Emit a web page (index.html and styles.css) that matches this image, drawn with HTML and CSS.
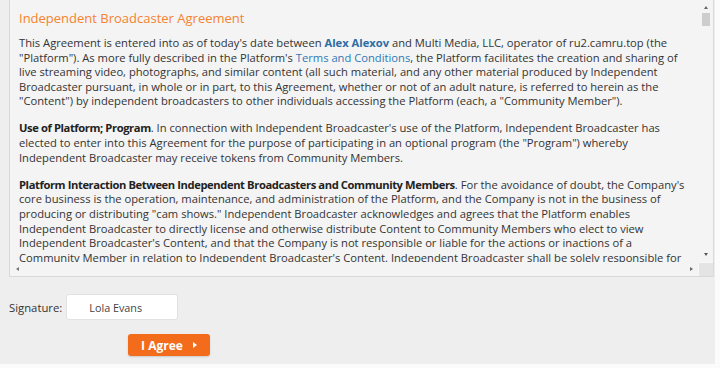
FILE: index.html
```
<!DOCTYPE html>
<html lang="en">
<head>
  <meta charset="UTF-8">
  <title>Independent Broadcaster Agreement</title>
  <link rel="stylesheet" href="styles.css">
</head>
<body>
  <div class="page">

    <!-- agreement box with fake scrollbars -->
    <div class="agreement">
      <div class="agreement-text">
        <h2>Independent Broadcaster Agreement</h2>
        <p>This Agreement is entered into as of today's date between <b class="blue">Alex Alexov</b> and Multi Media, LLC, operator of ru2.camru.top (the "Platform"). As more fully described in the Platform's <a href="#">Terms and Conditions</a>, the Platform facilitates the creation and sharing of live streaming video, photographs, and similar content (all such material, and any other material produced by Independent Broadcaster pursuant, in whole or in part, to this Agreement, whether or not of an adult nature, is referred to herein as the "Content") by independent broadcasters to other individuals accessing the Platform (each, a "Community Member").</p>
        <p><b>Use of Platform; Program</b>. In connection with Independent Broadcaster's use of the Platform, Independent Broadcaster has elected to enter into this Agreement for the purpose of participating in an optional program (the "Program") whereby Independent Broadcaster may receive tokens from Community Members.</p>
        <p><b>Platform Interaction Between Independent Broadcasters and Community Members</b>. For the avoidance of doubt, the Company's core business is the operation, maintenance, and administration of the Platform, and the Company is not in the business of producing or distributing "cam shows." Independent Broadcaster acknowledges and agrees that the Platform enables Independent Broadcaster to directly license and otherwise distribute Content to Community Members who elect to view Independent Broadcaster's Content, and that the Company is not responsible or liable for the actions or inactions of a Community Member in relation to Independent Broadcaster's Content. Independent Broadcaster shall be solely responsible for the Content it creates and shares through the Platform.</p>
      </div>
      <div class="vscroll">
        <span class="arrow up"></span>
        <span class="thumb"></span>
        <span class="track"></span>
        <span class="arrow down"></span>
      </div>
      <div class="hscroll">
        <span class="arrow left"></span>
        <span class="track"></span>
        <span class="arrow right"></span>
      </div>
      <div class="corner"></div>
    </div>

    <div class="signature">
      <label for="sig">Signature:</label>
      <input type="text" id="sig" value="Lola Evans">
    </div>

    <button class="agree-btn">I Agree <span class="caret"></span></button>
  </div>
</body>
</html>
```

FILE: styles.css
```
body {
  margin: 0;
  background-color: #fbfbfb;
  font-family: 'Open Sans', 'Liberation Sans', sans-serif;
  color: #333;
}

.page {
  width: 715px;
  height: 364px;
  background-color: #eeeeee;
  overflow: hidden;
}

.agreement {
  margin-left: 9px;
  width: 705px;
  height: 277px;
  box-sizing: border-box;
  border: 1px solid #d9d9d9;
  border-top: none;
  background-color: #f4f4f4;
  display: grid;
  grid-template-columns: 1fr 15px;
  grid-template-rows: 1fr 14px;
}

.agreement-text {
  overflow: hidden;
  padding: 10px 4px 0 9px;
}

h2 {
  margin: 0 0 10px 0;
  font-size: 13px;
  line-height: 16px;
  font-weight: normal;
  color: #f5832f;
}

p {
  margin: 0 0 12.5px 0;
  font-size: 11.2px;
  line-height: 14.6px;
  color: #333;
}

p b {
  color: #222;
  letter-spacing: -0.4px;
}

p b.blue {
  color: #2d6da3;
  letter-spacing: 0;
}

a {
  color: #2f78b7;
  text-decoration: none;
}

.vscroll {
  display: flex;
  flex-direction: column;
  align-items: center;
  padding-top: 6px;
}

.vscroll .thumb {
  width: 8px;
  height: 13px;
  margin-top: 4px;
  background-color: #cdcdcd;
}

.track {
  flex: 1;
}

.hscroll {
  display: flex;
  align-items: center;
  padding: 0 5px 0 6px;
}

.corner {
  background-color: #e4e4e4;
  border-left: 1px solid #f8f8f8;
  border-top: 1px solid #f8f8f8;
}

.arrow {
  width: 0;
  height: 0;
  border: 2.5px solid transparent;
}

.arrow.up {
  border-bottom: 3px solid #666;
  border-top: none;
}

.arrow.down {
  border-top: 3px solid #555;
  border-bottom: none;
  margin-bottom: 6px;
}

.arrow.left {
  border-right: 3px solid #777;
  border-left: none;
}

.arrow.right {
  border-left: 3px solid #666;
  border-right: none;
}

.signature {
  display: flex;
  align-items: center;
  margin: 17px 0 0 9px;
}

.signature label {
  font-size: 11.3px;
  color: #333;
}

.signature input {
  margin-left: 4px;
  width: 112px;
  height: 26px;
  box-sizing: border-box;
  border: 1px solid #e2e2e2;
  border-radius: 3px;
  background-color: #fff;
  padding: 0 0 0 22px;
  font-family: 'Open Sans', 'Liberation Sans', sans-serif;
  font-size: 10.8px;
  color: #444;
  outline: none;
}

.agree-btn {
  display: flex;
  align-items: center;
  justify-content: center;
  gap: 10px;
  margin: 14px 0 0 128px;
  width: 82px;
  height: 22px;
  border: none;
  border-radius: 3px;
  background-color: #f26c1c;
  box-shadow: 0 1px 2px rgba(0, 0, 0, 0.15);
  color: #fff;
  font-family: 'Open Sans', 'Liberation Sans', sans-serif;
  font-size: 12px;
  font-weight: bold;
  padding: 0;
}

.caret {
  width: 0;
  height: 0;
  border-top: 3.5px solid transparent;
  border-bottom: 3.5px solid transparent;
  border-left: 4px solid #fff;
}
```
